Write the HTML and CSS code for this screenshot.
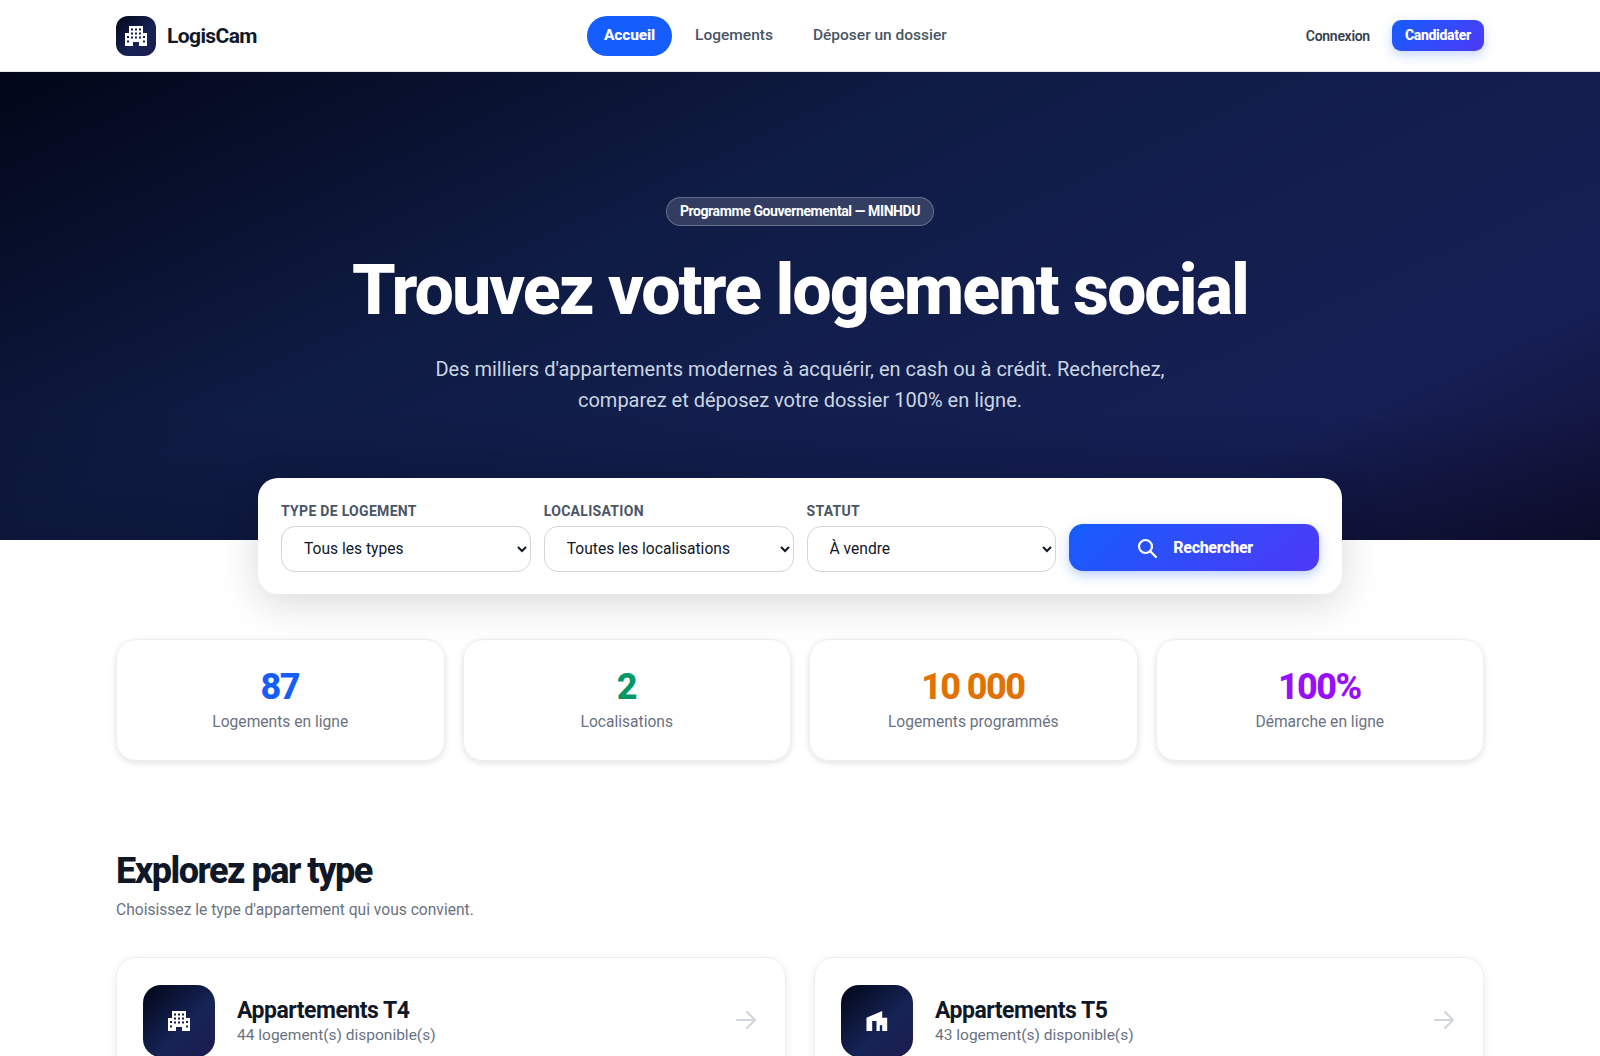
FILE: index.html
```html
<!DOCTYPE html>
<html lang="fr">
<head>
<meta charset="utf-8">
<title>LogisCam</title>
<link rel="stylesheet" href="styles.css">
</head>
<body>
<header class="navbar">
  <div class="container nav-inner">
    <a class="brand" href="#">
      <span class="brand-icon">
        <svg width="24" height="24" viewBox="0 0 24 24"><path fill="#fff" fill-rule="evenodd" d="M5 2h14v7h4v13h-8v-4H9v4H1V9h4zM7 4.500v2h2v-2zm4 0v2h2v-2zm4 0v2h2v-2zM7 8.500v2h2v-2zm4 0v2h2v-2zm4 0v2h2v-2zM7 12.500v2h2v-2zm4 0v2h2v-2zm4 0v2h2v-2zM3 12v2h2v-2zm16 0v2h2v-2zM3 16.500v2h2v-2zm16 0v2h2v-2z"/></svg>
      </span>
      <span class="brand-name">LogisCam</span>
    </a>
    <nav class="nav-links">
      <a class="nav-link active" href="#">Accueil</a>
      <a class="nav-link" href="#">Logements</a>
      <a class="nav-link" href="#">Déposer un dossier</a>
    </nav>
    <div class="nav-actions">
      <a class="login" href="#">Connexion</a>
      <a class="cta" href="#">Candidater</a>
    </div>
  </div>
</header>

<section class="hero">
  <span class="badge">Programme Gouvernemental — MINHDU</span>
  <h1>Trouvez votre logement social</h1>
  <p>Des milliers d'appartements modernes à acquérir, en cash ou à crédit. Recherchez, comparez et déposez votre dossier 100% en ligne.</p>
</section>

<form class="search">
  <label class="field"><span>Type de logement</span>
    <select><option>Tous les types</option></select></label>
  <label class="field"><span>Localisation</span>
    <select><option>Toutes les localisations</option></select></label>
  <label class="field"><span>Statut</span>
    <select><option>À vendre</option></select></label>
  <button class="search-btn" type="button">
    <svg width="24" height="24" viewBox="0 0 24 24" fill="none" stroke="#fff" stroke-width="2.200" stroke-linecap="round"><circle cx="10.500" cy="10.500" r="6.500"/><path d="M15.500 15.500 21 21"/></svg>
    Rechercher
  </button>
</form>

<main class="container">
  <section class="stats">
    <div class="stat"><strong class="blue">87</strong><span>Logements en ligne</span></div>
    <div class="stat"><strong class="green">2</strong><span>Localisations</span></div>
    <div class="stat"><strong class="orange">10 000</strong><span>Logements programmés</span></div>
    <div class="stat"><strong class="purple">100%</strong><span>Démarche en ligne</span></div>
  </section>

  <section class="types">
    <h2>Explorez par type</h2>
    <p class="lead">Choisissez le type d'appartement qui vous convient.</p>
    <div class="type-grid">
      <a class="type-card" href="#">
        <span class="type-icon">
          <svg width="24" height="24" viewBox="0 0 24 24"><path fill="#fff" fill-rule="evenodd" d="M5 2h14v7h4v13h-8v-4H9v4H1V9h4zM7 4.500v2h2v-2zm4 0v2h2v-2zm4 0v2h2v-2zM7 8.500v2h2v-2zm4 0v2h2v-2zm4 0v2h2v-2zM7 12.500v2h2v-2zm4 0v2h2v-2zm4 0v2h2v-2zM3 12v2h2v-2zm16 0v2h2v-2zM3 16.500v2h2v-2zm16 0v2h2v-2z"/></svg>
        </span>
        <span class="type-text"><b>Appartements T4</b><small>44 logement(s) disponible(s)</small></span>
        <svg class="arrow" width="24" height="24" viewBox="0 0 24 24" fill="none" stroke="#d1d5dc" stroke-width="2" stroke-linecap="round" stroke-linejoin="round"><path d="M3 12h18M13 4l8 8-8 8"/></svg>
      </a>
      <a class="type-card" href="#">
        <span class="type-icon">
          <svg width="24" height="24" viewBox="0 0 24 24"><path fill="#fff" fill-rule="evenodd" d="M1.500 8.700 17.200 2v6.700h5V22H1.500zM7.200 12h4.300v10H7.200zM14.800 16.300h2.400V22h-2.400z"/></svg>
        </span>
        <span class="type-text"><b>Appartements T5</b><small>43 logement(s) disponible(s)</small></span>
        <svg class="arrow" width="24" height="24" viewBox="0 0 24 24" fill="none" stroke="#d1d5dc" stroke-width="2" stroke-linecap="round" stroke-linejoin="round"><path d="M3 12h18M13 4l8 8-8 8"/></svg>
      </a>
    </div>
  </section>
</main>
</body>
</html>
```

FILE: styles.css
```css
* { box-sizing: border-box; }
html, body { margin: 0; height: 1056px; overflow: hidden; }
body { background: #fff; color: #101828; font-family: Roboto, "Liberation Sans", sans-serif; }
a { text-decoration: none; color: inherit; }

.container { width: 1400px; margin: 0 auto; padding: 0 16px; }

.navbar { height: 72px; background: #fff; border-bottom: 1px solid #e5e7eb; }
.nav-inner { height: 71px; display: flex; align-items: center; justify-content: space-between; position: relative; }
.brand { display: flex; align-items: center; gap: 11px; }
.brand-icon { width: 40px; height: 40px; border-radius: 12px; display: flex; align-items: center; justify-content: center; background: linear-gradient(135deg, #020618, #162456 60%, #1e1a4d); }
.brand-name { font-size: 21px; font-weight: 700; letter-spacing: -0.6px; color: #101828; }
.nav-links { display: flex; align-items: center; gap: 6px; margin-right: 12px; }
.nav-link { padding: 10px 17px 12px; line-height: 18px; font-size: 15.5px; font-weight: 500; color: #4a5565; }
.nav-link.active { background: #155dfc; color: #fff; font-weight: 800; border-radius: 20px; letter-spacing: -0.15px; height: 40px; }
.nav-actions { display: flex; align-items: center; gap: 22px; }
.login { font-size: 14px; font-weight: 600; color: #364153; letter-spacing: -0.3px; }
.cta { padding: 7px 13px; font-size: 14px; line-height: 17px; font-weight: 800; color: #fff; letter-spacing: -0.3px; border-radius: 9px; background: linear-gradient(135deg, #155dfc, #4f39f6); box-shadow: 0 4px 12px rgba(21, 93, 252, .25); }

.hero { height: 468px; padding-top: 125px; text-align: center; color: #fff; display: flex; flex-direction: column; align-items: center; background: linear-gradient(180deg, transparent 72%, rgba(2, 6, 24, .25)), linear-gradient(155deg, #020618 0%, #0f1c45 38%, #141f50 65%, #161f55 80%, #100e30 100%); }
.badge { height: 29px; line-height: 27px; padding: 0 13px; font-size: 14px; font-weight: 700; letter-spacing: -0.4px; border: 1px solid rgba(255,255,255,.25); border-radius: 15px; background: rgba(255,255,255,.15); }
.hero h1 { margin: 24px 0 0; font-size: 70px; line-height: 80px; font-weight: 800; letter-spacing: -2px; }
.hero p { margin: 23.5px 0 0; width: 760px; font-size: 20px; line-height: 31.5px; color: #cad5e2; }

.search { width: 1084px; height: 116px; margin: -62px auto 0; position: relative; padding: 24.5px 23px 0; display: grid; grid-template-columns: repeat(4, 1fr); column-gap: 13px; background: #fff; border-radius: 20px; box-shadow: 0 10px 40px rgba(0,0,0,.15); }
.field { display: flex; flex-direction: column; gap: 6px; }
.field span { font-size: 14px; line-height: 17px; font-weight: 700; letter-spacing: .3px; color: #4a5565; text-transform: uppercase; }
.field select { height: 46px; width: 100%; padding: 0 18px; font: 400 15.6px Roboto, sans-serif; color: #101828; background: #fff; border: 1.5px solid #d1d5dc; border-radius: 14px; }
.search-btn { height: 47px; margin-top: 21.5px; display: flex; align-items: center; justify-content: center; gap: 14px; font: 800 16px Roboto, sans-serif; letter-spacing: -0.3px; color: #fff; border: 0; border-radius: 14px; background: linear-gradient(135deg, #155dfc, #4f39f6); box-shadow: 0 4px 12px rgba(21, 93, 252, .3); }

.stats { margin-top: 45px; display: grid; grid-template-columns: repeat(4, 1fr); gap: 18px; }
.stat { height: 122px; padding-top: 26px; display: flex; flex-direction: column; align-items: center; border: 1px solid #eceef2; border-radius: 20px; box-shadow: 0 2px 6px rgba(0,0,0,.12); }
.stat strong { font-size: 36px; line-height: 42px; font-weight: 800; letter-spacing: -1.6px; margin-left: -1px; }
.stat span { margin-top: 4px; font-size: 15.6px; line-height: 20px; color: #6a7282; }
.blue { color: #155dfc; }
.green { color: #009966; }
.orange { color: #e17100; }
.purple { color: #9810fa; }

.types { margin-top: 87px; }
.types h2 { margin: 0; font-size: 36px; line-height: 46px; font-weight: 800; letter-spacing: -1.5px; color: #101828; }
.lead { margin: 5px 0 0; font-size: 15.6px; line-height: 22px; color: #6a7282; }
.type-grid { margin-top: 36px; display: grid; grid-template-columns: repeat(2, 1fr); gap: 28px; }
.type-card { height: 160px; padding: 27px 26px; display: flex; align-items: flex-start; gap: 22px; border: 1px solid #eceef2; border-radius: 20px; box-shadow: 0 2px 8px rgba(0,0,0,.08); }
.type-icon { width: 72px; height: 72px; border-radius: 18px; display: flex; align-items: center; justify-content: center; background: linear-gradient(135deg, #020618, #162456 60%, #1e1a4d); flex: none; }
.type-text { flex: 1; display: flex; flex-direction: column; padding-top: 12px; }
.type-text b { font-size: 23px; line-height: 28px; font-weight: 700; letter-spacing: -0.5px; color: #101828; }
.type-text small { font-size: 15.5px; line-height: 20px; color: #6a7282; }
.arrow { margin: 23px 1px 0 0; }
```
